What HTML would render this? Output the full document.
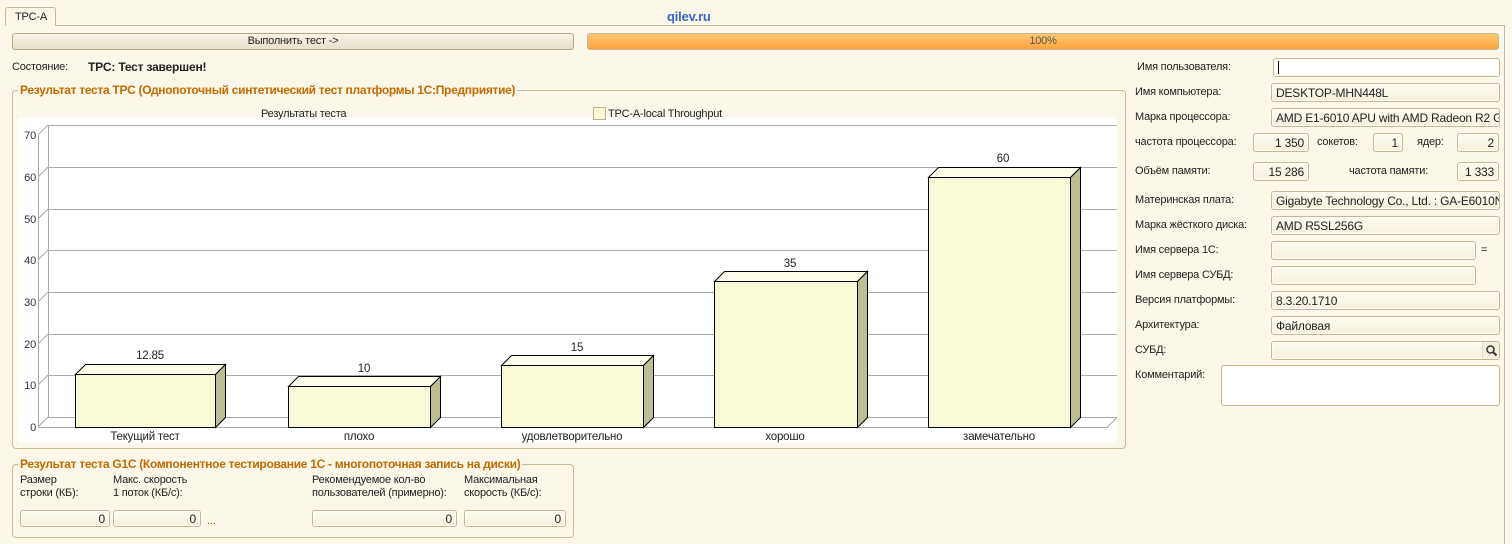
<!DOCTYPE html>
<html><head><meta charset="utf-8"><style>
*{box-sizing:border-box;margin:0;padding:0}
body{width:1512px;height:544px;background:#fbf8ea;font-family:"Liberation Sans",sans-serif;font-size:11px;color:#222;position:relative;overflow:hidden;letter-spacing:-0.2px}
.a{position:absolute;white-space:nowrap}
.f{position:absolute;height:19px;border:1px solid #c4b994;border-radius:3px;background:linear-gradient(#fdfbf2,#f5f0dc);padding:2px 4px;font-size:12px;line-height:14px;white-space:nowrap;overflow:hidden;box-shadow:inset 0 0 0 1px #fffdf6}
.w{background:#fff}
.r{text-align:right}
.grp{position:absolute;border:1px solid #c9bd98;border-radius:4px}
.gt{position:absolute;background:#fbf8ea;color:#c46a00;font-weight:bold;font-size:12px;padding:0 2px;white-space:nowrap;letter-spacing:-0.3px}
</style></head><body>
<!-- tab -->
<div class="a" style="left:5px;top:7px;width:51px;height:19px;border:1px solid #c4b994;border-bottom:none;border-radius:3px 3px 0 0;background:#fbf8ea;padding:3px 0 0 9px">TPC-A</div>
<div class="a" style="left:56px;top:25px;width:1449px;height:1px;background:#c4b994"></div>
<div class="a" style="left:1504px;top:25px;width:1px;height:519px;background:#c4b994"></div>
<div class="a" style="left:667px;top:9px;color:#3a66c8;font-weight:bold;font-size:13px">qilev.ru</div>
<!-- button -->
<div class="a" style="left:12px;top:33px;width:562px;height:17px;border:1px solid #b3a888;border-radius:3px;background:linear-gradient(#f7f4e8,#e6e0cc);text-align:center;line-height:15px">Выполнить тест -&gt;</div>
<div class="a" style="left:587px;top:33px;width:912px;height:17px;border:1px solid #c4b994;border-radius:3px;background:linear-gradient(#ffc774,#fba43a);text-align:center;line-height:15px;color:#555">100%</div>
<div class="a" style="left:12px;top:61px">Состояние:</div>
<div class="a" style="left:88px;top:60px;font-weight:bold;font-size:12px">TPC: Тест завершен!</div>
<!-- group 1 -->
<div class="grp" style="left:12px;top:90px;width:1114px;height:359px"></div>
<div class="gt" style="left:18px;top:83px">Результат теста TPC (Однопоточный синтетический тест платформы 1С:Предприятие)</div>
<div class="a" style="left:18px;top:117px;width:1099px;height:326px;background:#fff"></div>
<div class="a" style="left:261px;top:108px">Результаты теста</div>
<div class="a" style="left:593px;top:107px;width:13px;height:13px;background:#fafad2;border:1px solid #b9b48c"></div>
<div class="a" style="left:608px;top:108px">TPC-A-local Throughput</div>
<svg class="a" style="left:0;top:0" width="1512" height="544">
<g stroke="#aaa" fill="none" stroke-width="1">
<line x1="48.5" y1="125" x2="48.5" y2="417"/>
<line x1="38.5" y1="135" x2="38.5" y2="427"/>
<line x1="48" y1="417.5" x2="1117" y2="417.5"/>
<line x1="38" y1="427.5" x2="1107" y2="427.5"/>
<line x1="1107" y1="427.5" x2="1117" y2="417.5"/>
<line x1="48" y1="125.5" x2="1117" y2="125.5"/>
<line x1="48" y1="167.5" x2="1117" y2="167.5"/>
<line x1="48" y1="209.5" x2="1117" y2="209.5"/>
<line x1="48" y1="250.5" x2="1117" y2="250.5"/>
<line x1="48" y1="292.5" x2="1117" y2="292.5"/>
<line x1="48" y1="334.5" x2="1117" y2="334.5"/>
<line x1="48" y1="375.5" x2="1117" y2="375.5"/>
<path d="M38 135L48 125M38 177L48 167M38 219L48 209M38 260L48 250M38 302L48 292M38 344L48 334M38 385L48 375M38 427L48 417"/>
</g>
<g font-family="Liberation Sans" font-size="11" fill="#333" text-anchor="end">
<text x="36" y="139">70</text><text x="36" y="181">60</text><text x="36" y="223">50</text><text x="36" y="264">40</text><text x="36" y="306">30</text><text x="36" y="348">20</text><text x="36" y="389">10</text><text x="36" y="431">0</text>
</g>
<g stroke="#000" stroke-width="1">
<g id="b"></g>
<path d="M75.5 374.5h140v53h-140z" fill="#f9f9d3"/><path d="M75.5 374.5l10-10h140l-10 10z" fill="#fdfde9"/><path d="M215.5 374.5l10-10v53l-10 10z" fill="#bdbd96"/>
<path d="M288.5 386.5h142v41h-142z" fill="#f9f9d3"/><path d="M288.5 386.5l10-10h142l-10 10z" fill="#fdfde9"/><path d="M430.5 386.5l10-10v41l-10 10z" fill="#bdbd96"/>
<path d="M501.5 365.5h142v62h-142z" fill="#f9f9d3"/><path d="M501.5 365.5l10-10h142l-10 10z" fill="#fdfde9"/><path d="M643.5 365.5l10-10v62l-10 10z" fill="#bdbd96"/>
<path d="M714.5 281.5h143v146h-143z" fill="#f9f9d3"/><path d="M714.5 281.5l10-10h143l-10 10z" fill="#fdfde9"/><path d="M857.5 281.5l10-10v146l-10 10z" fill="#bdbd96"/>
<path d="M928.5 177.5h142v250h-142z" fill="#f9f9d3"/><path d="M928.5 177.5l10-10h142l-10 10z" fill="#fdfde9"/><path d="M1070.5 177.5l10-10v250l-10 10z" fill="#bdbd96"/>
</g>
<g font-family="Liberation Sans" font-size="11.5" fill="#222" text-anchor="middle">
<text x="150" y="359">12.85</text><text x="364" y="372">10</text><text x="577" y="351">15</text><text x="790" y="267">35</text><text x="1003" y="162">60</text>
<text x="145" y="440">Текущий тест</text><text x="359" y="440">плохо</text><text x="572" y="440">удовлетворительно</text><text x="785" y="440">хорошо</text><text x="999" y="440">замечательно</text>
</g>
</svg>
<!-- group 2 -->
<div class="grp" style="left:12px;top:464px;width:562px;height:74px"></div>
<div class="gt" style="left:18px;top:457px">Результат теста G1C (Компонентное тестирование 1С - многопоточная запись на диски)</div>
<div class="a" style="left:20px;top:474px;line-height:13px">Размер<br>строки (КБ):</div>
<div class="a" style="left:113px;top:474px;line-height:13px">Макс. скорость<br>1 поток (КБ/с):</div>
<div class="a" style="left:312px;top:474px;line-height:13px">Рекомендуемое кол-во<br>пользователей (примерно):</div>
<div class="a" style="left:464px;top:474px;line-height:13px">Максимальная<br>скорость (КБ/с):</div>
<div class="f r" style="left:20px;top:510px;width:90px;height:17px;line-height:12px">0</div>
<div class="f r" style="left:113px;top:510px;width:88px;height:17px;line-height:12px">0</div>
<div class="a" style="left:207px;top:515px;color:#a06010">...</div>
<div class="f r" style="left:312px;top:510px;width:145px;height:17px;line-height:12px">0</div>
<div class="f r" style="left:464px;top:510px;width:102px;height:17px;line-height:12px">0</div>
<!-- right panel -->
<div class="a" style="left:1137px;top:61px">Имя пользователя:</div>
<div class="f w" style="left:1273px;top:58px;width:227px"><span style="display:inline-block;width:1px;height:13px;background:#000"></span></div>
<div class="a" style="left:1135px;top:86px">Имя компьютера:</div>
<div class="f" style="left:1271px;top:83px;width:229px">DESKTOP-MHN448L</div>
<div class="a" style="left:1135px;top:111px">Марка процессора:</div>
<div class="f" style="left:1271px;top:108px;width:229px">AMD E1-6010 APU with AMD Radeon R2 Graphics</div>
<div class="a" style="left:1135px;top:136px">частота процессора:</div>
<div class="f r" style="left:1253px;top:133px;width:56px">1 350</div>
<div class="a" style="left:1317px;top:136px">сокетов:</div>
<div class="f r" style="left:1373px;top:133px;width:30px">1</div>
<div class="a" style="left:1417px;top:136px">ядер:</div>
<div class="f r" style="left:1457px;top:133px;width:42px">2</div>
<div class="a" style="left:1135px;top:165px">Объём памяти:</div>
<div class="f r" style="left:1253px;top:162px;width:56px">15 286</div>
<div class="a" style="left:1349px;top:165px">частота памяти:</div>
<div class="f r" style="left:1457px;top:162px;width:42px">1 333</div>
<div class="a" style="left:1135px;top:194px">Материнская плата:</div>
<div class="f" style="left:1271px;top:191px;width:229px">Gigabyte Technology Co., Ltd. : GA-E6010N</div>
<div class="a" style="left:1135px;top:219px">Марка жёсткого диска:</div>
<div class="f" style="left:1271px;top:216px;width:229px">AMD R5SL256G</div>
<div class="a" style="left:1135px;top:244px">Имя сервера 1С:</div>
<div class="f" style="left:1271px;top:241px;width:205px"></div>
<div class="a" style="left:1481px;top:244px">=</div>
<div class="a" style="left:1135px;top:269px">Имя сервера СУБД:</div>
<div class="f" style="left:1271px;top:266px;width:205px"></div>
<div class="a" style="left:1135px;top:294px">Версия платформы:</div>
<div class="f" style="left:1271px;top:291px;width:229px">8.3.20.1710</div>
<div class="a" style="left:1135px;top:319px">Архитектура:</div>
<div class="f" style="left:1271px;top:316px;width:229px">Файловая</div>
<div class="a" style="left:1135px;top:344px">СУБД:</div>
<div class="f" style="left:1271px;top:341px;width:229px"></div>
<div class="a" style="left:1482px;top:342px;width:17px;height:17px;border-left:1px solid #ddd;background:#f3efdf"><svg width="17" height="17"><circle cx="7.5" cy="7.5" r="3.5" fill="none" stroke="#333" stroke-width="1.5"/><path d="M10 10l3.5 3.5" stroke="#333" stroke-width="2"/></svg></div>
<div class="a" style="left:1135px;top:369px">Комментарий:</div>
<div class="f w" style="left:1221px;top:365px;width:279px;height:41px"></div>
</body></html>
